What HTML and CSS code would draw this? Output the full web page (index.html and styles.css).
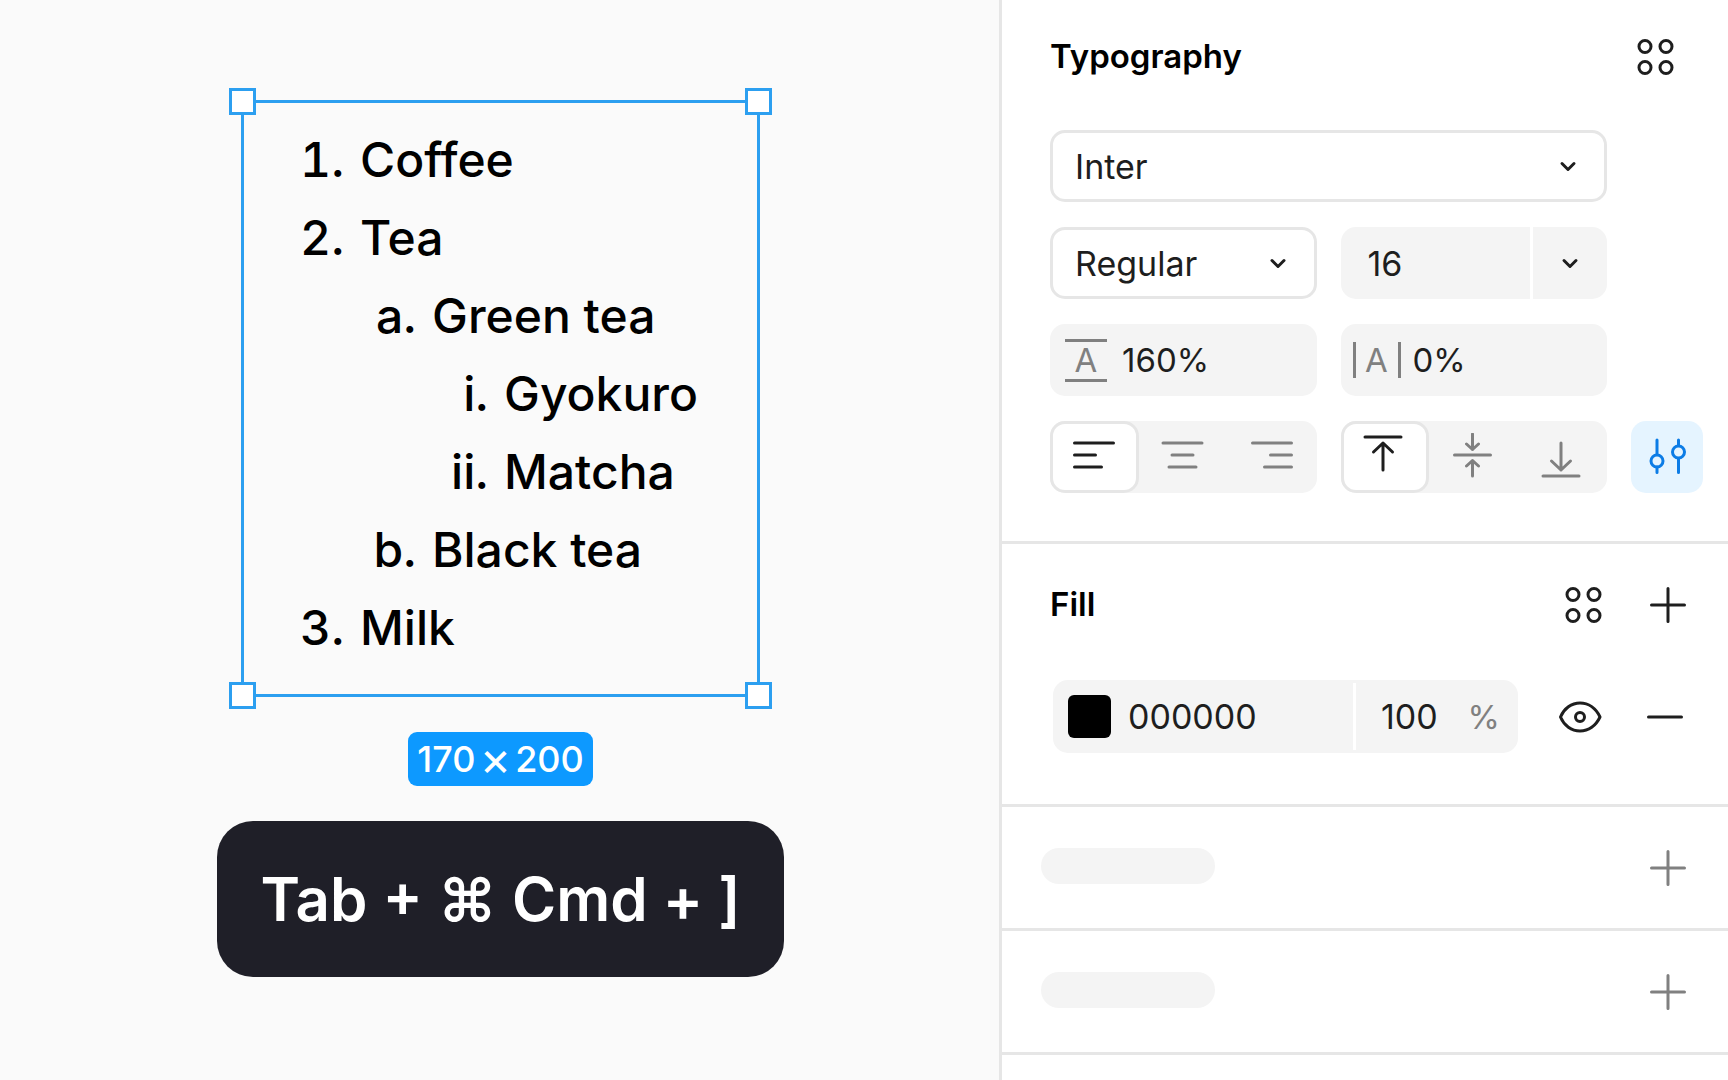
FILE: index.html
```html
<!DOCTYPE html>
<html lang="en">
<head>
<meta charset="utf-8">
<meta name="viewport" content="width=device-width, initial-scale=1">
<title>Typography</title>
<link rel="stylesheet" href="styles.css">
</head>
<body>
<svg class="sprite" aria-hidden="true">
  <symbol id="styles" viewBox="0 0 48 48"><circle cx="13" cy="13.500" r="6"/><circle cx="34" cy="13.500" r="6"/><circle cx="13" cy="34.500" r="6"/><circle cx="34" cy="34.500" r="6"/></symbol>
  <symbol id="plus" viewBox="0 0 48 48"><path d="M24 7.5v33M7.5 24h33"/></symbol>
  <symbol id="minus" viewBox="0 0 48 48"><path d="M7.500 24h33"/></symbol>
  <symbol id="chevron" viewBox="0 0 24 24"><path d="M6 9.500l6 6 6-6"/></symbol>
</svg>
<div class="app">
  <main class="canvas">
    <div class="selection">
      <ol class="list">
        <li>Coffee</li>
        <li>Tea
          <ol class="list-alpha">
            <li>Green tea
              <ol class="list-roman">
                <li>Gyokuro</li>
                <li>Matcha</li>
              </ol>
            </li>
            <li>Black tea</li>
          </ol>
        </li>
        <li>Milk</li>
      </ol>
      <span class="handle handle-tl"></span>
      <span class="handle handle-tr"></span>
      <span class="handle handle-bl"></span>
      <span class="handle handle-br"></span>
    </div>
    <div class="size-badge"><span>170</span><span class="times">×</span><span>200</span></div>
    <div class="shortcut">Tab + ⌘ Cmd + ]</div>
  </main>

  <aside class="panel">
    <section class="section typography">
      <header class="section-head">
        <h2>Typography</h2>
        <button class="icon-button" type="button" aria-label="Text styles"><svg class="icon"><use href="#styles"/></svg></button>
      </header>
      <div class="fields">
        <div class="select family">
          <select aria-label="Font family"><option>Inter</option></select>
          <svg class="chevron"><use href="#chevron"/></svg>
        </div>
        <div class="select weight">
          <select aria-label="Font weight"><option>Regular</option></select>
          <svg class="chevron"><use href="#chevron"/></svg>
        </div>
        <div class="combo">
          <input class="combo-input" type="text" value="16" aria-label="Font size">
          <button class="combo-button" type="button" aria-label="Font sizes"><svg class="chevron"><use href="#chevron"/></svg></button>
        </div>
        <label class="metric metric-line">
          <span class="glyph glyph-line" aria-hidden="true">A</span>
          <input type="text" value="160%" aria-label="Line height">
        </label>
        <label class="metric metric-letter">
          <span class="glyph glyph-letter" aria-hidden="true">A</span>
          <input type="text" value="0%" aria-label="Letter spacing">
        </label>
        <div class="segments segments-start">
          <button class="segment active" type="button" aria-label="Align left"><svg class="icon" viewBox="0 0 48 48"><path d="M4.500 10h39M4.500 22h21M4.500 34h27"/></svg></button>
          <button class="segment" type="button" aria-label="Align center"><svg class="icon" viewBox="0 0 48 48"><path d="M4 10h39M13 22h21M10 34h27"/></svg></button>
          <button class="segment" type="button" aria-label="Align right"><svg class="icon" viewBox="0 0 48 48"><path d="M4.500 10h39M22.500 22h21M16.500 34h27"/></svg></button>
        </div>
        <div class="segments">
          <button class="segment active" type="button" aria-label="Align top"><svg class="icon" viewBox="0 0 48 48"><path d="M4 4h36M22 37V10M12.500 19l9.500-9 9.500 9"/></svg></button>
          <button class="segment" type="button" aria-label="Align middle"><svg class="icon" viewBox="0 0 48 48"><path d="M4.500 22h36M22.500 1v15.500M16.500 11l6 5.500 6-5.500M22.500 43V27.500M16.500 33l6-5.500 6 5.500"/></svg></button>
          <button class="segment" type="button" aria-label="Align bottom"><svg class="icon" viewBox="0 0 48 48"><path d="M4 43h36M22 10v27M12.500 28l9.500 9 9.500-9"/></svg></button>
        </div>
        <button class="icon-button settings" type="button" aria-label="Type settings"><svg class="icon" viewBox="0 0 48 48"><path d="M14 7V21.500M14 34V39.500M35.500 7V12.500M35.500 25.500V39.500"/><circle cx="14" cy="28" r="6"/><circle cx="35.500" cy="19" r="6"/></svg></button>
      </div>
    </section>

    <section class="section fill">
      <header class="section-head">
        <h2>Fill</h2>
        <button class="icon-button" type="button" aria-label="Color styles"><svg class="icon"><use href="#styles"/></svg></button>
        <button class="icon-button" type="button" aria-label="Add fill"><svg class="icon"><use href="#plus"/></svg></button>
      </header>
      <div class="paint">
        <div class="paint-field">
          <button class="swatch" type="button" aria-label="Color"></button>
          <input class="hex" type="text" value="000000" aria-label="Hex color">
          <label class="opacity"><input type="text" value="100" aria-label="Opacity"><span>%</span></label>
        </div>
        <button class="icon-button" type="button" aria-label="Hide fill"><svg class="icon" viewBox="0 0 48 48"><path d="M3.500 24C7 15.500 14.500 10 23 10S39 15.500 43 24C39 32.500 31.500 38 23 38S7 32.500 3.500 24Z"/><circle cx="23" cy="24" r="4.500"/></svg></button>
        <button class="icon-button" type="button" aria-label="Remove fill"><svg class="icon"><use href="#minus"/></svg></button>
      </div>
    </section>

    <section class="section collapsed">
      <span class="pill"></span>
      <button class="icon-button" type="button" aria-label="Add"><svg class="icon"><use href="#plus"/></svg></button>
    </section>
    <section class="section collapsed">
      <span class="pill"></span>
      <button class="icon-button" type="button" aria-label="Add"><svg class="icon"><use href="#plus"/></svg></button>
    </section>
  </aside>
</div>
</body>
</html>
```
FILE: styles.css
```css
:root {
  --ink: #1e1e1e;
  --muted: #808080;
  --line: #e6e6e6;
  --soft: #f4f4f4;
  --accent: #0d99ff;
}

* { box-sizing: border-box; }

body {
  margin: 0;
  font-family: Inter, "Liberation Sans", sans-serif;
  font-size: 34px;
  color: var(--ink);
  background: #fff;
}

button, input, select {
  margin: 0;
  padding: 0;
  border: 0;
  font: inherit;
  color: inherit;
  background: none;
  min-width: 0;
}

.sprite { position: absolute; width: 0; height: 0; }

.app {
  display: grid;
  grid-template-columns: minmax(0, 1fr) minmax(0, 729px);
  min-height: 100vh;
}

/* Canvas */
.canvas {
  display: flex;
  flex-direction: column;
  align-items: center;
  gap: 35px;
  padding: 100px 0 40px 2px;
  background: #fafafa;
}

.selection {
  position: relative;
  width: 519px;
  padding: 18px 0 27px 44px;
  border: 3px solid #2c9ff0;
}

.list, .list-alpha, .list-roman {
  margin: 0;
  padding-left: 69px;
}

.list {
  font-size: 48px;
  font-weight: 450;
  line-height: 78px;
  color: #000;
  list-style: decimal;
}

.list li { padding-left: 3px; }
.list-alpha { list-style: lower-alpha; }
.list-roman { list-style: lower-roman; }

.handle {
  position: absolute;
  width: 27px;
  height: 27px;
  border: 3px solid #2c9ff0;
  background: #fff;
}

.handle-tl { top: -15px; left: -15px; }
.handle-tr { top: -15px; right: -15px; }
.handle-bl { bottom: -15px; left: -15px; }
.handle-br { bottom: -15px; right: -15px; }

.size-badge {
  display: flex;
  align-items: center;
  gap: 4px;
  padding: 0 9px;
  border-radius: 9px;
  font-size: 36px;
  font-weight: 450;
  line-height: 54px;
  color: #fff;
  background: var(--accent);
}

.times {
  font-size: 48px;
  font-weight: 400;
}

.shortcut {
  padding: 0 43px;
  border-radius: 36px;
  font-size: 60px;
  font-weight: 600;
  line-height: 156px;
  white-space: nowrap;
  color: #fff;
  background: #1f1f28;
}

/* Panel */
.panel {
  border-left: 3px solid var(--line);
  background: #fff;
}

.section {
  padding: 0 24px 0 48px;
  border-bottom: 3px solid var(--line);
}

.section-head {
  display: flex;
  align-items: center;
  gap: 12px;
}

.section-head h2 {
  flex: 1;
  margin: 0;
  padding-bottom: 2px;
  font-size: 33px;
  font-weight: 600;
  line-height: 42px;
  color: #000;
}

.typography { padding-top: 21px; padding-bottom: 48px; }
.typography .section-head { padding-right: 12px; }
.fill { padding-top: 25px; padding-bottom: 51px; }

.icon-button {
  display: grid;
  place-items: center;
  flex: none;
  width: 72px;
  height: 72px;
  border-radius: 15px;
}

.icon {
  display: block;
  width: 48px;
  height: 48px;
}

.icon, .chevron {
  fill: none;
  stroke: currentColor;
  stroke-width: 3px;
  stroke-linecap: round;
  stroke-linejoin: round;
}

.chevron {
  width: 24px;
  height: 24px;
}

.fields {
  display: grid;
  grid-template-columns: minmax(0, 1fr) minmax(0, 1fr) 72px;
  grid-auto-rows: 72px;
  gap: 25px 24px;
  margin-top: 37px;
  padding-right: 1px;
}

.select {
  display: grid;
  grid-template-columns: minmax(0, 1fr) 48px;
  align-items: center;
  border: 3px solid var(--line);
  border-radius: 15px;
}

.select select {
  grid-area: 1 / 1 / 2 / 3;
  height: 100%;
  padding-left: 22px;
  appearance: none;
}

.select .chevron {
  grid-area: 1 / 2;
  pointer-events: none;
}

.family { grid-column: 1 / 3; }
.weight, .metric-line, .segments-start { grid-column: 1; }

.combo {
  display: grid;
  grid-template-columns: minmax(0, 1fr) 74px;
  gap: 3px;
  border-radius: 15px;
  overflow: hidden;
}

.combo-input {
  padding-left: 27px;
  background: var(--soft);
}

.combo-button {
  display: grid;
  place-items: center;
  background: var(--soft);
}

.metric {
  display: flex;
  align-items: center;
  border-radius: 15px;
  font-size: 33px;
  background: var(--soft);
}

.metric input {
  flex: 1;
  height: 100%;
}

.metric-line { gap: 15px; padding-left: 15px; }
.metric-letter { gap: 12px; padding-left: 12px; }

.glyph {
  text-align: center;
  color: var(--muted);
}

.glyph-line {
  width: 42px;
  border-top: 3px solid;
  border-bottom: 3px solid;
  line-height: 37px;
}

.glyph-letter {
  width: 48px;
  border-left: 3px solid;
  border-right: 3px solid;
  line-height: 36px;
}

.segments {
  display: grid;
  grid-template-columns: repeat(3, minmax(0, 1fr));
  border-radius: 15px;
  background: var(--soft);
}

.segment {
  display: grid;
  place-items: center;
  border: 3px solid transparent;
  border-radius: 15px;
  color: var(--muted);
}

.segment.active {
  border-color: var(--line);
  color: var(--ink);
  background: #fff;
}

.settings {
  color: #0c7ce6;
  background: #e5f4ff;
}

.paint {
  display: flex;
  align-items: center;
  gap: 12px;
  margin-top: 39px;
  padding: 0 3px;
}

.paint-field {
  display: flex;
  flex: 1;
  align-items: center;
  height: 73px;
  margin-right: 15px;
  padding-left: 15px;
  border-radius: 15px;
  background: var(--soft);
}

.swatch {
  flex: none;
  width: 43px;
  height: 43px;
  border-radius: 6px;
  background: #000;
}

.hex {
  flex: 1;
  width: 0;
  padding-left: 17px;
}

.opacity {
  display: flex;
  align-items: center;
  width: 165px;
  height: 67px;
  padding: 0 18px 0 25px;
  border-left: 3px solid #fff;
}

.opacity input { flex: 1; width: 0; }
.opacity span { font-size: 33px; color: var(--muted); }

.collapsed {
  display: flex;
  align-items: center;
  justify-content: space-between;
  height: 124px;
  padding-left: 39px;
  color: var(--muted);
}

.pill {
  width: 174px;
  height: 36px;
  margin-bottom: 4px;
  border-radius: 18px;
  background: var(--soft);
}
```
